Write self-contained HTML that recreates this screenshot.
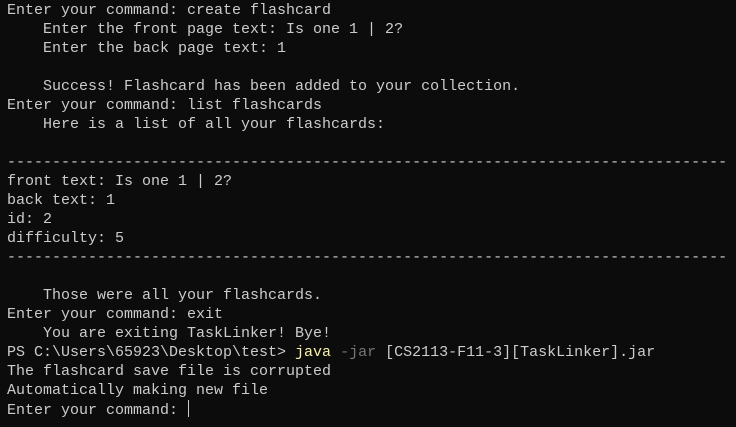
<!DOCTYPE html>
<html><head><style>
html,body{margin:0;padding:0;background:#0c0c0c;width:736px;height:427px;overflow:hidden}
pre{margin:0;padding:1px 0 0 7px;font-family:"Liberation Mono",monospace;font-size:15px;line-height:19px;color:#cccccc;white-space:pre}
.y{color:#f9f1a5}.g{color:#767676}
.c{display:inline-block;width:1px;height:17px;background:#cccccc;vertical-align:-3px;margin-left:1px}
</style></head><body><pre>Enter your command: create flashcard
    Enter the front page text: Is one 1 | 2?
    Enter the back page text: 1

    Success! Flashcard has been added to your collection.
Enter your command: list flashcards
    Here is a list of all your flashcards:

--------------------------------------------------------------------------------
front text: Is one 1 | 2?
back text: 1
id: 2
difficulty: 5
--------------------------------------------------------------------------------

    Those were all your flashcards.
Enter your command: exit
    You are exiting TaskLinker! Bye!
PS C:\Users\65923\Desktop\test&gt; <span class="y">java</span> <span class="g">-jar</span> [CS2113-F11-3][TaskLinker].jar
The flashcard save file is corrupted
Automatically making new file
Enter your command: <span class="c"></span></pre></body></html>
